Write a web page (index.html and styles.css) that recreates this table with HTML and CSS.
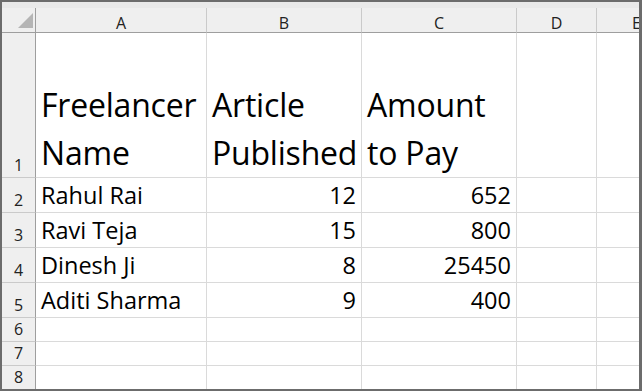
FILE: index.html
```html
<!DOCTYPE html>
<html lang="en">
<head>
    <meta charset="UTF-8">
    <meta name="viewport" content="width=device-width, initial-scale=1.0">
    <title>Freelancer Payments</title>
    <link rel="stylesheet" href="styles.css">
</head>
<body>
    <div class="window">
        <div class="ribbon-edge"></div>

        <div class="sheet">
            <!-- column headers -->
            <div class="corner">
                <svg width="16" height="16" viewBox="0 0 16 16"><polygon points="16,0 16,15 1,15" fill="#b5b5b5"/></svg>
            </div>
            <div class="col-head">A</div>
            <div class="col-head">B</div>
            <div class="col-head">C</div>
            <div class="col-head">D</div>
            <div class="col-head">E</div>

            <!-- row 1: titles -->
            <div class="row-head">1</div>
            <div class="cell title">Freelancer<br>Name</div>
            <div class="cell title">Article<br>Published</div>
            <div class="cell title">Amount<br>to Pay</div>
            <div class="cell"></div>
            <div class="cell"></div>

            <div class="row-head">2</div>
            <div class="cell data">Rahul Rai</div>
            <div class="cell data num">12</div>
            <div class="cell data num">652</div>
            <div class="cell"></div>
            <div class="cell"></div>

            <div class="row-head">3</div>
            <div class="cell data">Ravi Teja</div>
            <div class="cell data num">15</div>
            <div class="cell data num">800</div>
            <div class="cell"></div>
            <div class="cell"></div>

            <div class="row-head">4</div>
            <div class="cell data">Dinesh Ji</div>
            <div class="cell data num">8</div>
            <div class="cell data num">25450</div>
            <div class="cell"></div>
            <div class="cell"></div>

            <div class="row-head">5</div>
            <div class="cell data">Aditi Sharma</div>
            <div class="cell data num">9</div>
            <div class="cell data num">400</div>
            <div class="cell"></div>
            <div class="cell"></div>

            <div class="row-head">6</div>
            <div class="cell"></div>
            <div class="cell"></div>
            <div class="cell"></div>
            <div class="cell"></div>
            <div class="cell"></div>

            <div class="row-head">7</div>
            <div class="cell"></div>
            <div class="cell"></div>
            <div class="cell"></div>
            <div class="cell"></div>
            <div class="cell"></div>

            <div class="row-head">8</div>
            <div class="cell"></div>
            <div class="cell"></div>
            <div class="cell"></div>
            <div class="cell"></div>
            <div class="cell"></div>
        </div>
    </div>
</body>
</html>
```

FILE: styles.css
```css
body {
    margin: 0;
    padding: 0;
    width: 642px;
    height: 391px;
    overflow: hidden;
    background: #fff;
    font-family: "Open Sans", "Noto Sans", sans-serif;
}

.window {
    box-sizing: border-box;
    width: 642px;
    height: 391px;
    border: 2px solid #6c6c6c;
    border-right-width: 3px;
    background: #fff;
    display: flex;
    flex-direction: column;
    overflow: hidden;
}

.ribbon-edge {
    height: 6px;
    background: #e9e9e9;
    flex-shrink: 0;
}

.sheet {
    display: grid;
    grid-template-columns: 34px 171px 155px 155px 80px 80px;
    grid-template-rows: 25px 145px 35px 35px 35px 35px 24px 24px 24px;
    overflow: hidden;
}

.corner {
    box-sizing: border-box;
    background: #efefef;
    border-right: 1px solid #9e9e9e;
    border-bottom: 1px solid #9e9e9e;
    display: flex;
    align-items: flex-end;
    justify-content: flex-end;
    padding: 0 2px 3px 0;
}

.col-head {
    box-sizing: border-box;
    background: #efefef;
    border-right: 1px solid #cacaca;
    border-bottom: 1px solid #9e9e9e;
    color: #222;
    font-size: 16px;
    line-height: 20px;
    padding-top: 5px;
    text-align: center;
}

.row-head {
    box-sizing: border-box;
    background: #efefef;
    border-right: 1px solid #9e9e9e;
    border-bottom: 1px solid #cacaca;
    color: #222;
    font-size: 16px;
    line-height: 20px;
    padding-bottom: 2px;
    display: flex;
    align-items: flex-end;
    justify-content: center;
}

.cell {
    box-sizing: border-box;
    border-right: 1px solid #dadada;
    border-bottom: 1px solid #dadada;
    color: #000;
    padding: 0 5px 0 5px;
    display: flex;
    flex-direction: column;
    justify-content: flex-end;
    white-space: nowrap;
}

.title {
    font-size: 32px;
    line-height: 48px;
    letter-spacing: -0.2px;
}

.data {
    font-size: 23.5px;
    line-height: 31px;
    padding-bottom: 1px;
}

.num {
    align-items: flex-end;
}
```
